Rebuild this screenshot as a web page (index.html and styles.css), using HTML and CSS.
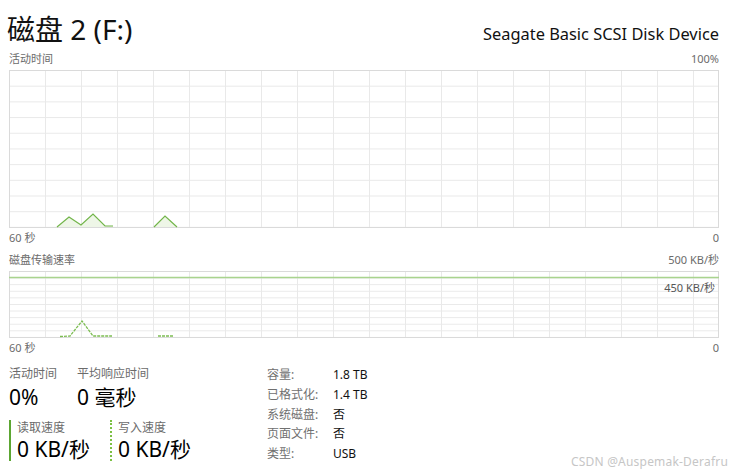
FILE: index.html
```html
<!DOCTYPE html>
<html lang="zh-CN">
<head>
<meta charset="utf-8">
<title>磁盘 2 (F:)</title>
<link rel="stylesheet" href="styles.css">
</head>
<body>
<div class="page">
  <header class="header">
    <h1 class="title">磁盘 2 (F:)</h1>
    <div class="device">Seagate Basic SCSI Disk Device</div>
  </header>

  <div class="axis-row top-label">
    <span>活动时间</span>
    <span>100%</span>
  </div>
  <div class="graph graph-active">
    <svg class="trace" viewBox="0 0 710 158" width="710" height="158">
      <polygon class="fill" points="48,157 60,147 72,155 84,144 96,156 104,156 104,157"/>
      <polyline class="line" points="48,157 60,147 72,155 84,144 96,156 104,156"/>
      <polygon class="fill" points="145,157 156,146 168,157"/>
      <polyline class="line" points="145,157 156,146 168,157"/>
    </svg>
  </div>
  <div class="axis-row bottom-label">
    <span>60 秒</span>
    <span>0</span>
  </div>

  <div class="axis-row top-label second">
    <span>磁盘传输速率</span>
    <span>500 KB/秒</span>
  </div>
  <div class="graph graph-transfer">
    <svg class="trace" viewBox="0 0 710 67" width="710" height="67">
      <line class="max-line" x1="0" y1="6.5" x2="710" y2="6.5"/>
      <polyline class="dash" points="51,65.5 61,65 73,50 84,65 103,65"/>
      <polyline class="dash" points="149,65 165,65"/>
    </svg>
    <span class="scale-tag">450 KB/秒</span>
  </div>
  <div class="axis-row bottom-label">
    <span>60 秒</span>
    <span>0</span>
  </div>

  <section class="stats">
    <div class="stats-left">
      <div class="stat-row">
        <div class="stat stat-active">
          <div class="stat-label">活动时间</div>
          <div class="stat-value">0%</div>
        </div>
        <div class="stat">
          <div class="stat-label">平均响应时间</div>
          <div class="stat-value">0 毫秒</div>
        </div>
      </div>
      <div class="stat-row rw-row">
        <div class="stat rw read">
          <div class="stat-label">读取速度</div>
          <div class="stat-value">0 KB/秒</div>
        </div>
        <div class="stat rw write">
          <div class="stat-label">写入速度</div>
          <div class="stat-value">0 KB/秒</div>
        </div>
      </div>
    </div>
    <dl class="info">
      <dt>容量:</dt><dd>1.8 TB</dd>
      <dt>已格式化:</dt><dd>1.4 TB</dd>
      <dt>系统磁盘:</dt><dd>否</dd>
      <dt>页面文件:</dt><dd>否</dd>
      <dt>类型:</dt><dd>USB</dd>
    </dl>
  </section>

  <div class="watermark">CSDN @Auspemak-Derafru</div>
</div>
</body>
</html>
```

FILE: styles.css
```css
html, body {
  margin: 0;
  padding: 0;
  background: #ffffff;
}

body {
  font-family: "Noto Sans", "Noto Sans CJK SC", sans-serif;
  color: #000;
  width: 742px;
  height: 474px;
  overflow: hidden;
}

.page {
  position: relative;
  width: 742px;
  height: 474px;
  box-sizing: border-box;
  padding: 11px 23px 0 9px;
}

.header {
  display: flex;
  justify-content: space-between;
  align-items: baseline;
  height: 36px;
}

.title {
  margin: 0 0 0 -2px;
  font-weight: normal;
  font-size: 28px;
  line-height: 36px;
  color: #111;
}

.device {
  font-size: 16.4px;
  line-height: 36px;
  color: #111;
}

.axis-row {
  display: flex;
  justify-content: space-between;
  font-size: 11px;
  line-height: 14px;
  color: #6b6b6b;
}

.top-label {
  margin-top: 5px;
  margin-bottom: 4px;
}

.top-label.second {
  margin-top: 8px;
}

.bottom-label {
  margin-top: 3px;
}

.graph {
  position: relative;
  box-sizing: border-box;
  width: 710px;
  border: 1px solid #dadada;
  background-origin: border-box;
  background-image:
    linear-gradient(to right, #e9e9e9 1px, transparent 1px),
    linear-gradient(to bottom, #e9e9e9 1px, transparent 1px);
}

.graph-active {
  height: 158px;
  background-size: 36px 100%, 100% 15.7px;
}

.graph-transfer {
  height: 67px;
  background-size: 36px 100%, 100% 6.6px;
}

.trace {
  display: block;
  margin: -1px;
  overflow: visible;
}

.trace .fill {
  fill: #eef6e7;
  stroke: none;
}

.trace .line {
  fill: none;
  stroke: #72b54a;
  stroke-width: 1.2;
}

.trace .max-line {
  stroke: #a9d48e;
  stroke-width: 1.5;
}

.trace .dash {
  fill: none;
  stroke: #7cbd52;
  stroke-width: 1.3;
  stroke-dasharray: 3 1;
}

.scale-tag {
  position: absolute;
  right: 3px;
  top: 9px;
  font-size: 11px;
  line-height: 14px;
  color: #555;
}

.stats {
  display: flex;
  margin-top: 11px;
}

.stats-left {
  width: 258px;
}

.stat-row {
  display: flex;
}

.stat {
  margin-right: 20px;
}

.stat-active {
  width: 48px;
}

.stat-label {
  font-size: 12px;
  line-height: 16px;
  color: #6b6b6b;
}

.stat-value {
  font-size: 21px;
  line-height: 26px;
  margin-top: 2px;
  color: #000;
}

.rw-row {
  margin-top: 10px;
}

.rw {
  height: 41px;
  padding-left: 6px;
  margin-right: 0;
}

.rw .stat-value {
  margin-top: 0;
}

.read {
  width: 93px;
  border-left: 2px solid #5ca632;
}

.write {
  border-left: 2px dotted #7cc043;
}

.info {
  display: grid;
  grid-template-columns: 66px auto;
  margin: -1px 0 0 0;
  font-size: 12px;
  line-height: 19.75px;
}

.info dt {
  color: #707070;
}

.info dd {
  margin: 0;
  color: #111;
}

.watermark {
  position: absolute;
  right: 14px;
  bottom: 5px;
  font-size: 12px;
  line-height: 14px;
  color: #c6c6c6;
  letter-spacing: 0.2px;
}
```
